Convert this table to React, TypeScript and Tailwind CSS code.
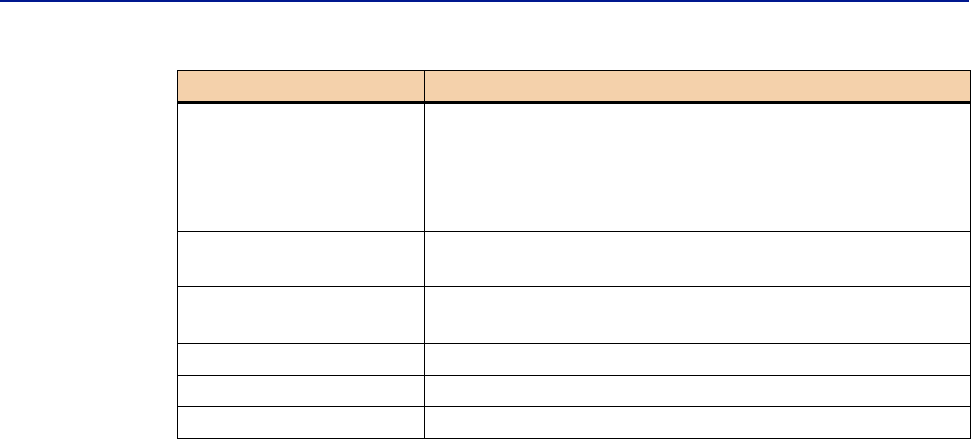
import React from "react";

const rows = [127, 54, 56, 31, 30, 31];

const Row: React.FC<{ height: number; first?: boolean }> = ({ height, first }) => {
  return (
    <div
      className={`flex ${first ? "" : "border-t border-black"}`}
      style={{ height: height + (first ? 0 : 1) }}
    >
      <div className="w-[247px] shrink-0 border-r border-black" />
      <div className="flex-1" />
    </div>
  );
};

export default function App() {
  return (
    <div className="w-[971px] h-[440px] bg-white font-['Liberation_Sans',sans-serif]">
      {/* Top rule */}
      <div className="h-[2px] w-[969px] bg-[#00188f]" />

      {/* Table */}
      <div className="ml-[177px] mt-[68px] w-[794px] border border-black">
        {/* Header */}
        <div className="flex h-[30px] bg-[#f4d1ab]">
          <div className="w-[247px] shrink-0 border-r border-black" />
          <div className="flex-1" />
        </div>
        <div className="h-[3px] bg-black" />

        {rows.map((h, i) => (
          <Row key={i} height={h} first={i === 0} />
        ))}
      </div>
    </div>
  );
}
